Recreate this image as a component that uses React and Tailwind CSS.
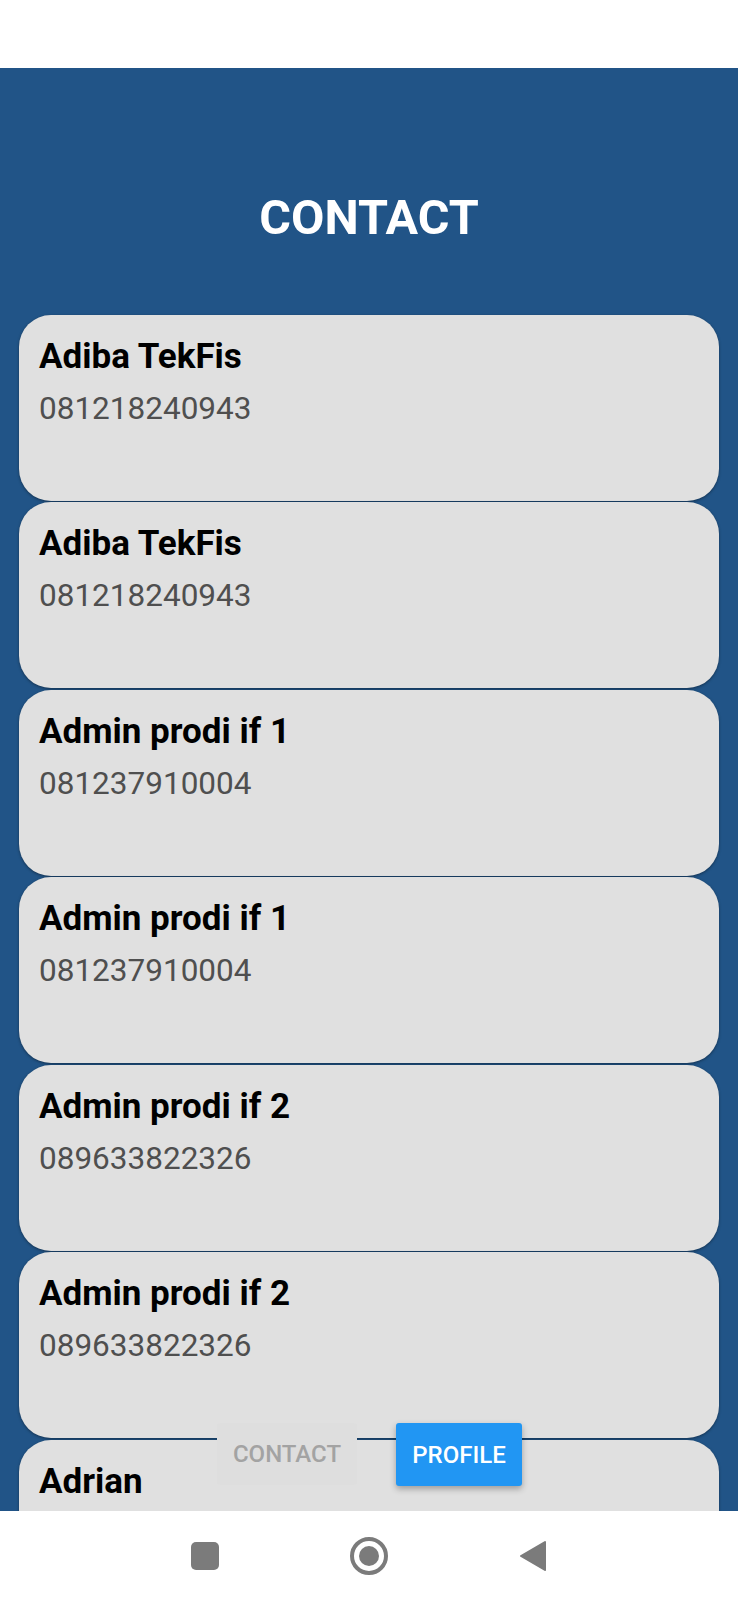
import React from 'react';

const contacts = [
  { name: 'Adiba TekFis', phone: '081218240943' },
  { name: 'Adiba TekFis', phone: '081218240943' },
  { name: 'Admin prodi if 1', phone: '081237910004' },
  { name: 'Admin prodi if 1', phone: '081237910004' },
  { name: 'Admin prodi if 2', phone: '089633822326' },
  { name: 'Admin prodi if 2', phone: '089633822326' },
  { name: 'Adrian', phone: '081234567890' },
];

const ContactCard = ({ name, phone }) => (
  <div className="h-[186px] shrink-0 rounded-[32px] bg-[#e0e0e0] px-[20px] pt-[24px] shadow-[0_1px_3px_rgba(0,0,0,0.4)]">
    <div className="text-[35px] font-bold leading-none text-black">{name}</div>
    <div className="mt-[19px] text-[31.5px] leading-none text-[#4f4f4f]">{phone}</div>
  </div>
);

const App = () => {
  return (
    <div
      className="relative flex h-[1600px] w-[738px] flex-col overflow-hidden bg-white"
      style={{ fontFamily: 'Roboto, "Liberation Sans", sans-serif' }}
    >
      {/* status area */}
      <div className="h-[68px] shrink-0 bg-white" />

      {/* Main */}
      <div className="flex flex-1 flex-col overflow-hidden bg-[#215487]">
        <div className="shrink-0 pt-[126px] text-center text-[48.5px] font-bold leading-none text-white">
          CONTACT
        </div>
        <div className="mt-[72px] flex flex-col gap-[1.5px] px-[19px]">
          {contacts.map((c, i) => (
            <ContactCard key={i} name={c.name} phone={c.phone} />
          ))}
        </div>
      </div>

      {/* Tab buttons */}
      <div className="absolute left-0 top-[1423px] flex w-full">
        <div className="ml-[217px] flex h-[62px] w-[140px] items-center justify-center rounded-[3px] bg-[#dedede] text-[24px] font-medium text-[#a3a3a3]">
          CONTACT
        </div>
        <div className="ml-[39px] flex h-[63px] w-[126px] items-center justify-center rounded-[3px] bg-[#2196f3] text-[24px] font-medium text-white shadow-[0_3px_6px_rgba(0,0,0,0.3)]">
          PROFILE
        </div>
      </div>

      {/* Android nav bar */}
      <div className="flex h-[89px] shrink-0 items-center bg-white">
        <div className="ml-[191px] h-[28px] w-[28px] rounded-[5px] bg-[#7b7b7b]" />
        <div className="ml-[131px] flex h-[38px] w-[38px] items-center justify-center rounded-full border-[4px] border-[#7b7b7b]">
          <div className="h-[20px] w-[20px] rounded-full bg-[#7b7b7b]" />
        </div>
        <svg className="ml-[131px]" width="28" height="32" viewBox="0 0 28 32">
          <path d="M26 2 L2 16 L26 30 Z" fill="#7b7b7b" stroke="#7b7b7b" strokeWidth="2" strokeLinejoin="round" />
        </svg>
      </div>
    </div>
  );
};

export default App;
